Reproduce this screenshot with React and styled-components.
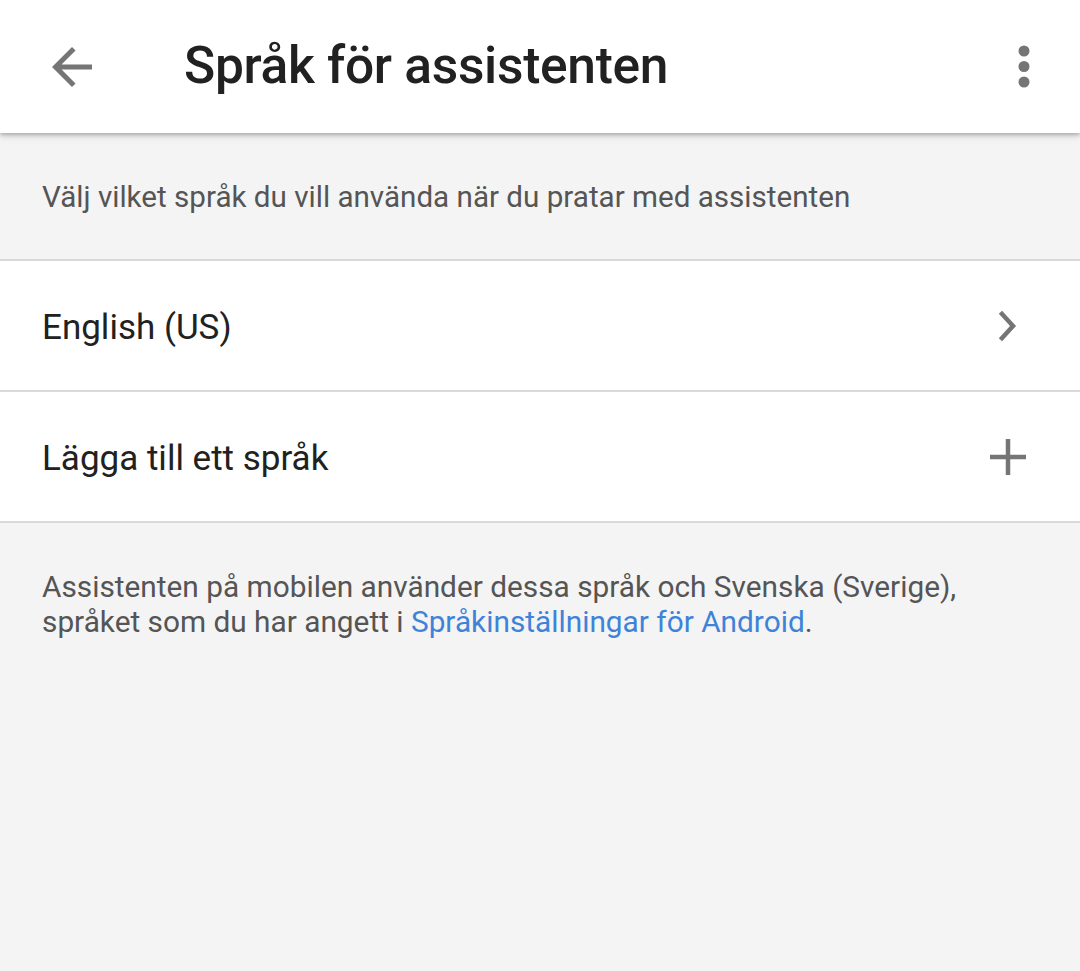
import React from "react";
import styled, { createGlobalStyle } from "styled-components";

const Global = createGlobalStyle`
  html, body { margin: 0; padding: 0; background: #f4f4f4; }
  body { font-family: Roboto, "Noto Sans", sans-serif; -webkit-font-smoothing: antialiased; }
  #root { min-height: 971px; }
`;

const Page = styled.div`
  width: 1080px;
  min-height: 971px;
  background: #f4f4f4;
  display: flex;
  flex-direction: column;
`;

const Toolbar = styled.header`
  height: 133px;
  background: #ffffff;
  display: flex;
  align-items: center;
  box-shadow: 0 2px 4px rgba(0, 0, 0, 0.25), 0 4px 8px rgba(0, 0, 0, 0.08);
  position: relative;
  z-index: 1;
`;

const IconButton = styled.button`
  width: ${(p) => p.$w || 60}px;
  height: 60px;
  margin-left: ${(p) => p.$ml || 0}px;
  margin-right: ${(p) => p.$mr || 0}px;
  border: none;
  background: transparent;
  padding: 0;
  display: flex;
  align-items: center;
  justify-content: center;
  color: #757575;
`;

const Title = styled.h1`
  flex: 1;
  margin: -3px 0 0 82px;
  font-size: 51.5px;
  font-weight: 500;
  color: #212121;
  letter-spacing: -0.3px;
`;

const Description = styled.p`
  margin: 0;
  padding: 47px 42px 44px;
  font-size: 29.6px;
  line-height: 35px;
  color: #555555;
`;

const List = styled.div`
  border-top: 2px solid #d9d9d9;
`;

const Row = styled.div`
  height: 129px;
  background: #ffffff;
  border-bottom: 2px solid #d9d9d9;
  display: flex;
  align-items: center;
  justify-content: space-between;
  padding: 0 53px 0 42px;
  box-sizing: content-box;
`;

const RowText = styled.span`
  font-size: 35px;
  color: #212121;
  margin-top: 3px;
`;

const RowIcon = styled.span`
  width: 38px;
  height: 38px;
  display: flex;
  align-items: center;
  justify-content: center;
`;

const Footer = styled.p`
  margin: 0;
  padding: 46px 42px;
  font-size: 29.8px;
  line-height: 35px;
  color: #555555;
`;

const Link = styled.a`
  color: #3f83d9;
  text-decoration: none;
`;

const BackIcon = () => (
  <svg width="60" height="60" viewBox="0 0 24 24" fill="#757575">
    <path d="M20 11H7.83l5.59-5.59L12 4l-8 8 8 8 1.41-1.41L7.83 13H20v-2z" />
  </svg>
);

const MoreIcon = () => (
  <svg width="12" height="44" viewBox="0 0 12 44" fill="#757575">
    <circle cx="6" cy="6" r="5.5" />
    <circle cx="6" cy="21.5" r="5.5" />
    <circle cx="6" cy="37" r="5.5" />
  </svg>
);

const ChevronIcon = () => (
  <svg width="20" height="32" viewBox="0 0 20 32" fill="none" stroke="#757575" strokeWidth="4.5" strokeLinecap="square">
    <path d="M4 4 L15 16 L4 28" />
  </svg>
);

const PlusIcon = () => (
  <svg width="38" height="38" viewBox="0 0 38 38" fill="none" stroke="#757575" strokeWidth="4.5">
    <path d="M19 1 V37 M1 19 H37" />
  </svg>
);

export default function App() {
  return (
    <>
      <Global />
      <Page>
        <Toolbar>
          <IconButton $ml={42}>
            <BackIcon />
          </IconButton>
          <Title>Språk för assistenten</Title>
          <IconButton $w={40} $mr={36}>
            <MoreIcon />
          </IconButton>
        </Toolbar>
        <Description>Välj vilket språk du vill använda när du pratar med assistenten</Description>
        <List>
          <Row>
            <RowText>English (US)</RowText>
            <RowIcon>
              <ChevronIcon />
            </RowIcon>
          </Row>
          <Row>
            <RowText>Lägga till ett språk</RowText>
            <RowIcon>
              <PlusIcon />
            </RowIcon>
          </Row>
        </List>
        <Footer>
          Assistenten på mobilen använder dessa språk och Svenska (Sverige),
          <br />
          språket som du har angett i <Link href="#">Språkinställningar för Android</Link>.
        </Footer>
      </Page>
    </>
  );
}
